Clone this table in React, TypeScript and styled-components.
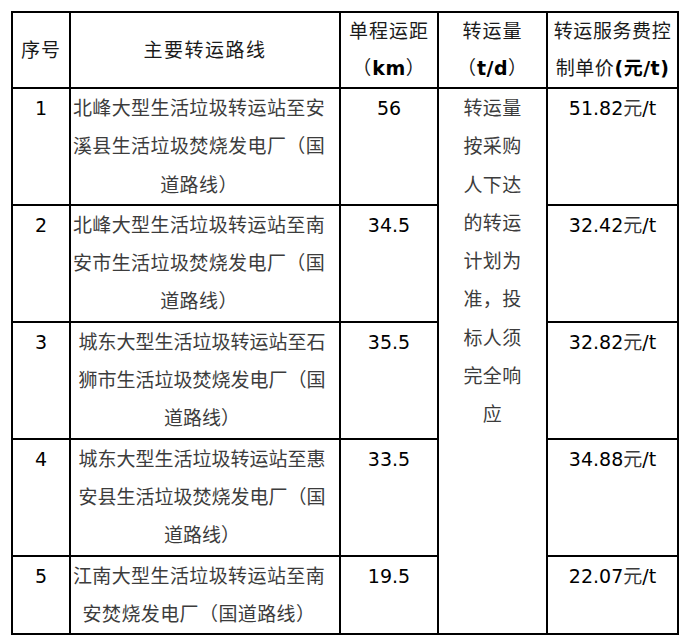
import React from 'react';
import styled, { createGlobalStyle } from 'styled-components';

const GlobalStyle = createGlobalStyle`
  html, body {
    margin: 0;
    background: #fff;
  }
  #root {
    padding: 11px;
  }
`;

type Route = {
  seq: number;
  route: string;
  distance: string;
  price: string;
  inset?: boolean;
};

const routes: Route[] = [
  { seq: 1, route: '北峰大型生活垃圾转运站至安溪县生活垃圾焚烧发电厂（国道路线）', distance: '56', price: '51.82' },
  { seq: 2, route: '北峰大型生活垃圾转运站至南安市生活垃圾焚烧发电厂（国道路线）', distance: '34.5', price: '32.42' },
  { seq: 3, route: '城东大型生活垃圾转运站至石狮市生活垃圾焚烧发电厂（国道路线）', distance: '35.5', price: '32.82', inset: true },
  { seq: 4, route: '城东大型生活垃圾转运站至惠安县生活垃圾焚烧发电厂（国道路线）', distance: '33.5', price: '34.88', inset: true },
  { seq: 5, route: '江南大型生活垃圾转运站至南安焚烧发电厂（国道路线）', distance: '19.5', price: '22.07' },
];

const volumeNote = '转运量按采购人下达的转运计划为准，投标人须完全响应';

export default function App() {
  return (
    <>
      <GlobalStyle />
      <Sheet>
        <colgroup>
          <col style={{ width: 58 }} />
          <col style={{ width: 270 }} />
          <col style={{ width: 98 }} />
          <col style={{ width: 109 }} />
          <col style={{ width: 131 }} />
        </colgroup>
        <thead>
          <tr>
            <HeadCell>序号</HeadCell>
            <HeadCell $wide>主要转运路线</HeadCell>
            <HeadCell>
              <Line>单程运距</Line>
              <Line>（<Bold>km</Bold>）</Line>
            </HeadCell>
            <HeadCell>
              <Line>转运量</Line>
              <Line>（<Bold>t/d</Bold>）</Line>
            </HeadCell>
            <HeadCell $tight>
              <Line>转运服务费控</Line>
              <Line>制单价<Bold>(元/t)</Bold></Line>
            </HeadCell>
          </tr>
        </thead>
        <tbody>
          {routes.map((r, i) => (
            <tr key={r.seq}>
              <SeqCell>{r.seq}</SeqCell>
              <RouteCell $inset={r.inset}>{r.route}</RouteCell>
              <ValueCell>{r.distance}</ValueCell>
              {i === 0 && <VolumeCell rowSpan={routes.length}>{volumeNote}</VolumeCell>}
              <ValueCell>
                {r.price}
                <Unit>元</Unit>/t
              </ValueCell>
            </tr>
          ))}
        </tbody>
      </Sheet>
    </>
  );
}

const Sheet = styled.table`
  border-collapse: collapse;
  table-layout: fixed;
  width: 668px;
  font-family: 'DejaVu Sans', 'Noto Sans CJK SC', sans-serif;
  font-size: 19px;
  color: #000;
`;

const HeadCell = styled.th<{ $wide?: boolean; $tight?: boolean }>`
  border: 2px solid #000;
  padding: 0;
  font-weight: normal;
  line-height: 37px;
  vertical-align: middle;
  text-align: center;
  color: #1a1a1a;
  letter-spacing: ${(p) => (p.$wide ? '1.5px' : p.$tight ? '0.6px' : '1px')};
  white-space: nowrap;
`;

const Line = styled.span`
  display: block;
`;

const Bold = styled.b`
  font-weight: bold;
  letter-spacing: 0.5px;
  color: #000;
`;

const BodyCell = styled.td`
  border: 2px solid #000;
  padding: 0;
  line-height: 38.3px;
  vertical-align: top;
  text-align: center;
`;

const SeqCell = styled(BodyCell)``;

const RouteCell = styled(BodyCell)<{ $inset?: boolean }>`
  padding: ${(p) => (p.$inset ? '0 11px 0 5px' : '0 13px 0 1px')};
  letter-spacing: ${(p) => (p.$inset ? '0' : '0.4px')};
  color: #3c3c3c;
`;

const ValueCell = styled(BodyCell)``;

const Unit = styled.span`
  color: #3c3c3c;
`;

const VolumeCell = styled(BodyCell)`
  padding: 0 16px;
  letter-spacing: 0.4px;
  color: #3c3c3c;
`;
